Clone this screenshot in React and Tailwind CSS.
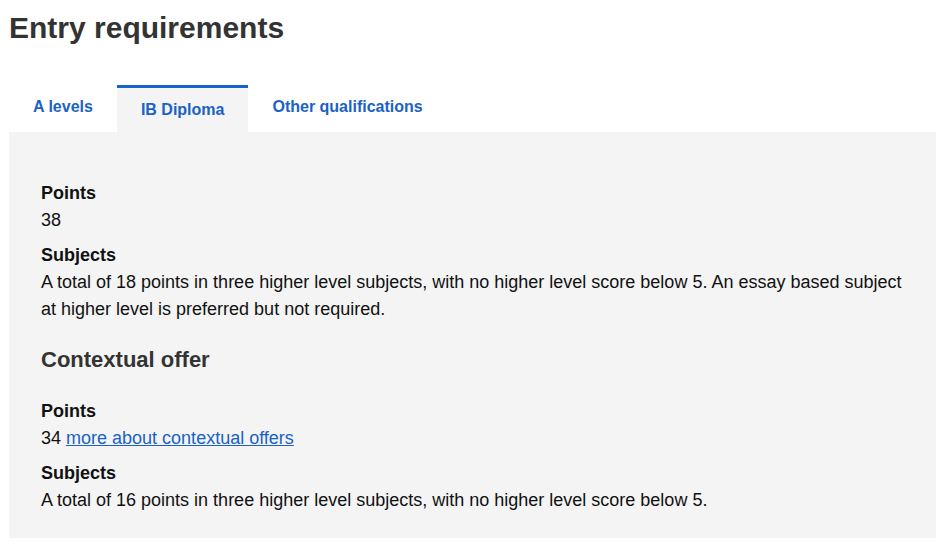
import { useState } from 'react';

const tabs = ['A levels', 'IB Diploma', 'Other qualifications'];

const Field = ({ label, children, className = '' }) => (
    <div className={className}>
        <div className="font-bold">{label}</div>
        <div>{children}</div>
    </div>
);

export default function App() {
    const [active, setActive] = useState(1);

    return (
        <div className="min-h-screen bg-white pl-[9px] pr-[4px] font-['Liberation_Sans',Arial,sans-serif] text-[#111]">
            <h1 className="pt-[10px] text-[30px] font-bold leading-[36px] text-[#333]">Entry requirements</h1>

            {/* Tabs */}
            <div className="mt-[39px] flex items-end">
                {tabs.map((tab, index) => (
                    <button
                        key={tab}
                        onClick={() => setActive(index)}
                        className={
                            index === active
                                ? 'border-t-[3px] border-[#1464cc] bg-[#f4f4f4] px-6 pt-[10px] pb-[10px] text-[16px] font-bold leading-6 text-[#1a62c6]'
                                : 'px-6 pt-[10px] pb-[13px] text-[16px] font-bold leading-6 text-[#1a62c6]'
                        }
                    >
                        {tab}
                    </button>
                ))}
            </div>

            {/* Panel */}
            <div className="bg-[#f4f4f4] px-8 pt-[48px] pb-[24px] text-[18px] leading-[27px]">
                <Field label="Points">38</Field>
                <Field label="Subjects" className="mt-2">
                    A total of 18 points in three higher level subjects, with no higher level score below 5. An essay based subject at higher level is preferred but not required.
                </Field>

                <h2 className="mt-6 mb-[25px] text-[22px] font-bold leading-[26px] text-[#333]">Contextual offer</h2>

                <Field label="Points">
                    34{' '}
                    <a href="#" className="text-[#1a62c6] underline">more about contextual offers</a>
                </Field>
                <Field label="Subjects" className="mt-2">
                    A total of 16 points in three higher level subjects, with no higher level score below 5.
                </Field>
            </div>
        </div>
    );
}
